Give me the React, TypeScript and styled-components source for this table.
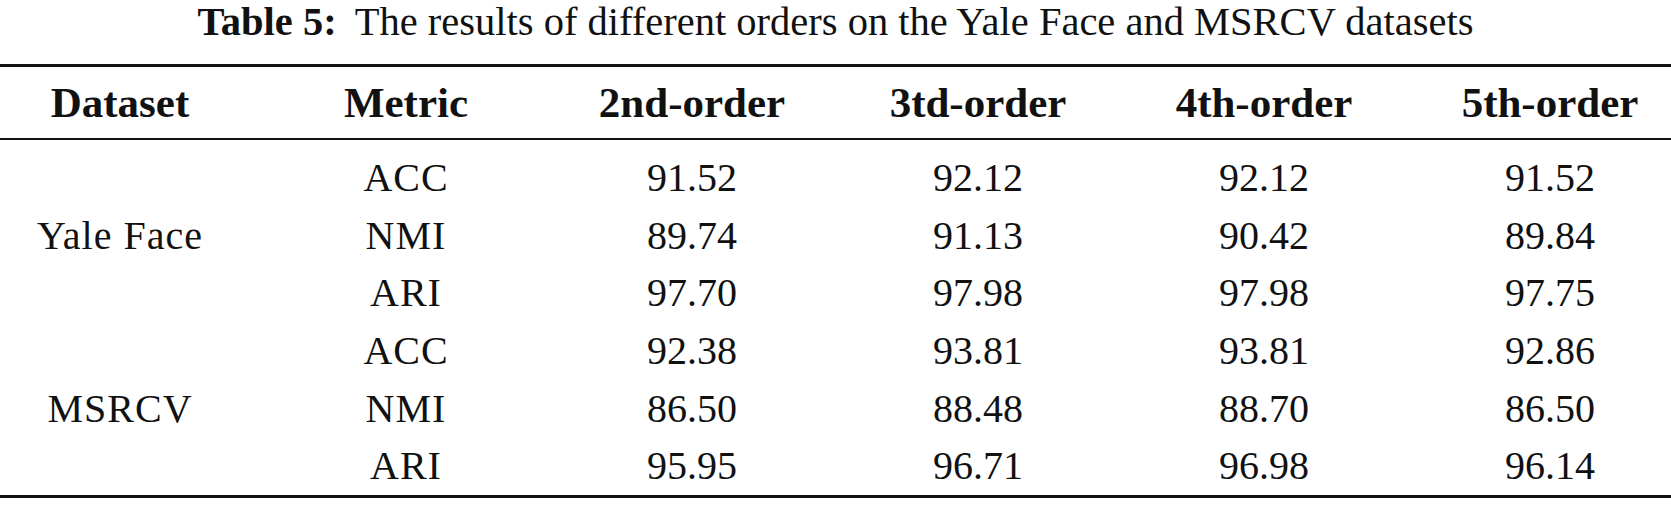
import React from 'react';
import styled, { createGlobalStyle } from 'styled-components';

const GlobalStyle = createGlobalStyle`
  html, body {
    margin: 0;
    padding: 0;
    background: #ffffff;
  }
  body {
    font-family: "Liberation Serif", "Times New Roman", serif;
    color: #111111;
  }
`;

const Page = styled.div`
  width: 1671px;
  height: 506px;
  overflow: hidden;
`;

const Caption = styled.div`
  height: 64px;
  font-size: 40.5px;
  line-height: 44px;
  text-align: center;
  white-space: nowrap;
`;

const CaptionLabel = styled.b`
  margin-right: 18px;
`;

// grid is a bit wider than the page, the rules get clipped at both edges
const Table = styled.div`
  margin: 0 -22px 0 -23px;
  border-top: 3px solid #111;
  border-bottom: 3px solid #111;
`;

const HeadRow = styled.div`
  display: grid;
  grid-template-columns: repeat(6, 1fr);
  height: 71px;
  align-items: center;
  border-bottom: 2px solid #111;
  font-size: 43px;
  font-weight: 700;
`;

const Body = styled.div`
  display: grid;
  grid-template-columns: repeat(6, 1fr);
  grid-auto-rows: 57.6px;
  padding-top: 9px;
  font-size: 40px;
`;

const Cell = styled.div<{ $wide?: boolean }>`
  display: flex;
  align-items: center;
  justify-content: center;
  white-space: nowrap;
  letter-spacing: ${(p) => (p.$wide ? '1px' : '0')};
`;

const DatasetCell = styled(Cell)<{ $row: number }>`
  grid-column: 1;
  grid-row: ${(p) => p.$row} / span 3;
`;

const headers = ['Dataset', 'Metric', '2nd-order', '3td-order', '4th-order', '5th-order'];

const groups = [
  {
    name: 'Yale Face',
    rows: [
      ['ACC', '91.52', '92.12', '92.12', '91.52'],
      ['NMI', '89.74', '91.13', '90.42', '89.84'],
      ['ARI', '97.70', '97.98', '97.98', '97.75'],
    ],
  },
  {
    name: 'MSRCV',
    rows: [
      ['ACC', '92.38', '93.81', '93.81', '92.86'],
      ['NMI', '86.50', '88.48', '88.70', '86.50'],
      ['ARI', '95.95', '96.71', '96.98', '96.14'],
    ],
  },
];

export default function App() {
  return (
    <Page>
      <GlobalStyle />
      <Caption>
        <CaptionLabel>Table 5:</CaptionLabel>
        The results of different orders on the Yale Face and MSRCV datasets
      </Caption>
      <Table>
        <HeadRow>
          {headers.map((h) => (
            <Cell key={h}>{h}</Cell>
          ))}
        </HeadRow>
        <Body>
          {groups.map((g, gi) => (
            <React.Fragment key={g.name}>
              <DatasetCell $row={gi * 3 + 1} $wide>
                {g.name}
              </DatasetCell>
              {g.rows.map((r) =>
                r.map((v, ci) => (
                  <Cell key={g.name + r[0] + ci} $wide={ci === 0}>
                    {v}
                  </Cell>
                ))
              )}
            </React.Fragment>
          ))}
        </Body>
      </Table>
    </Page>
  );
}
